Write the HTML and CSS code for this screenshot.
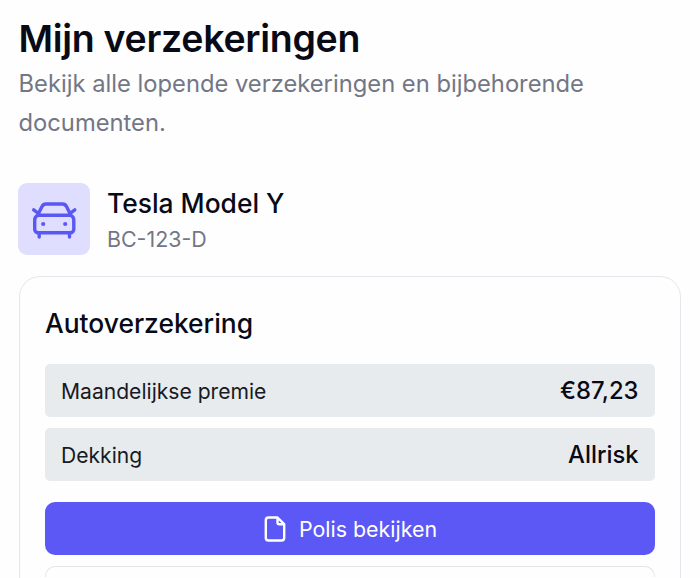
FILE: index.html
```html
<!DOCTYPE html>
<html lang="nl">
<head>
<meta charset="utf-8">
<title>Mijn verzekeringen</title>
<link rel="stylesheet" href="styles.css">
</head>
<body>
<main class="page">
  <h1 class="title">Mijn verzekeringen</h1>
  <p class="intro">Bekijk alle lopende verzekeringen en bijbehorende documenten.</p>
  <section class="vehicle">
    <div class="vehicle-icon">
      <svg viewBox="0 0 48 48" width="48" height="48" fill="none" stroke="currentColor" stroke-width="3.400" stroke-linecap="round" stroke-linejoin="round">
        <path d="M3.700 14.800l4.800 3.700 3.500-7c.8-1.700 2-2.500 4-2.500h16.500c2 0 3.200.8 4 2.500l3.500 7 4.800-3.700M8 20.200h32.500"/>
        <path d="M8 20.200c-2.300 1-3.300 2.500-3.300 4.700v9.300a3.500 3.500 0 0 0 3.500 3.500h32.100a3.500 3.500 0 0 0 3.500-3.500v-9.300c0-2.200-1-3.700-3.300-4.700"/>
        <path d="M9.200 38v4M39.500 38v4"/>
        <path stroke-width="4.200" d="M13.200 29h.01M35.200 29h.01"/>
      </svg>
    </div>
    <div class="vehicle-text">
      <h2 class="vehicle-name">Tesla Model Y</h2>
      <p class="plate">BC-123-D</p>
    </div>
  </section>
  <section class="card">
    <h3 class="card-title">Autoverzekering</h3>
    <dl class="facts">
      <div class="fact"><dt>Maandelijkse premie</dt><dd>€87,23</dd></div>
      <div class="fact"><dt>Dekking</dt><dd>Allrisk</dd></div>
    </dl>
    <button class="button primary">
      <svg viewBox="0 0 24 28" width="24" height="28" fill="none" stroke="currentColor" stroke-width="2.400" stroke-linejoin="round"><path d="M14.500 2.500H5.500A2.700 2.700 0 0 0 2.800 5.200v17.600a2.700 2.700 0 0 0 2.700 2.700h13a2.700 2.700 0 0 0 2.700-2.700V9.200zM14.500 2.500v5A1.700 1.700 0 0 0 16.200 9.200h5"/></svg>
      <span>Polis bekijken</span>
    </button>
    <button class="button secondary"></button>
  </section>
</main>
</body>
</html>
```
FILE: styles.css
```css
* { box-sizing: border-box; margin: 0; }
body { height: 578px; background: #fefefe; color: #080a16; font-family: Inter, sans-serif; }
.page { display: flex; flex-direction: column; height: 578px; padding: 16px 19px 0 18.5px; }
.title { font-size: 37.5px; line-height: 46px; font-weight: 600; letter-spacing: -.3px; }
.intro { margin-top: 2px; font-size: 23.75px; line-height: 39px; color: #737685; }
.vehicle { display: flex; align-items: center; gap: 17px; height: 72px; margin: 41px 0 0 -.5px; }
.vehicle-icon { display: grid; place-items: center; width: 72px; height: 72px; border-radius: 9px; background: #dfdefe; color: #5b57f3; }
.vehicle-text { padding-top: 2px; }
.vehicle-name { font-size: 26.4px; line-height: 38px; font-weight: 500; }
.plate { font-size: 21.4px; line-height: 34px; color: #737685; }
.card { flex: 1; min-height: 0; margin-top: 21px; padding: 26px 25px 0 25.5px; border: 1px solid #e6e7ec; border-bottom: 0; border-radius: 21px 21px 0 0; overflow: hidden; }
.card-title { font-size: 26.4px; line-height: 41px; font-weight: 500; }
.facts { display: grid; gap: 11px; margin-top: 20px; }
.fact { display: flex; align-items: center; justify-content: space-between; height: 53px; padding: 0 16.5px 0 16px; border-radius: 5px; background: #e7ebed; }
dt { padding-top: 1px; font-size: 21.1px; color: #171a24; }
dd { font-size: 23.8px; font-weight: 500; }
.button { display: flex; align-items: center; justify-content: center; gap: 12px; width: 100%; height: 53px; padding: 0; border: 0; border-radius: 10px; font: 400 21.4px Inter, sans-serif; }
.primary { margin-top: 21px; background: #5c58f6; color: #fff; }
.secondary { height: 11px; margin-top: 11px; background: #fefefe; border: 1px solid #e3e5e9; border-bottom: 0; border-radius: 10px 10px 0 0; }
```
